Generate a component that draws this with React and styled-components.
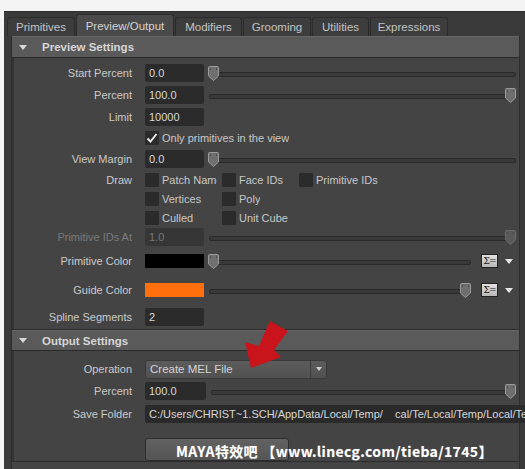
import React from 'react';
import styled, { createGlobalStyle } from 'styled-components';

const GlobalStyle = createGlobalStyle`
    html, body {
        margin: 0;
        padding: 0;
        background: #f4f4f4;
        font-family: "Liberation Sans", Arial, sans-serif;
        font-size: 11px;
        color: #c8c8c8;
    }
`;

const Page = styled.div`
    position: relative;
    width: 525px;
    height: 469px;
    padding-top: 11px;
    box-sizing: border-box;
    overflow: hidden;
`;

const Window = styled.div`
    margin-left: 4px;
    height: 458px;
    background: #3a3a3a;
    border-top: 1px solid #2e2e2e;
    box-sizing: border-box;
`;

const TabBar = styled.div`
    display: flex;
    align-items: flex-end;
    height: 24px;
    padding-left: 3px;
    gap: 1px;
`;

const Tab = styled.div`
    display: flex;
    align-items: center;
    justify-content: center;
    width: ${p => p.w}px;
    height: ${p => (p.active ? 22 : 19)}px;
    box-sizing: border-box;
    background: ${p => (p.active ? '#4a4a4a' : '#3d3d3d')};
    border: 1px solid #2c2c2c;
    border-bottom: none;
    border-radius: 3px 3px 0 0;
    color: ${p => (p.active ? '#d4d4d4' : '#c4c4c4')};
    font-size: 11.5px;
`;

const Panel = styled.div`
    margin-left: 7px;
    width: 509px;
    background: #444444;
    border-left: 1px solid #2e2e2e;
    border-right: 1px solid #2e2e2e;
    box-sizing: border-box;
    height: 434px;
`;

const SectionHeader = styled.div`
    display: flex;
    align-items: center;
    height: ${p => p.h}px;
    background: #5a5a5a;
    border-top: 1px solid #666;
    border-bottom: 1px solid #2a2a2a;
    box-sizing: border-box;
    font-weight: bold;
    font-size: 11.5px;
    color: #d6d6d6;
    padding-left: 7px;
    gap: 15px;
`;

const Triangle = styled.span`
    width: 0;
    height: 0;
    border-left: 4.5px solid transparent;
    border-right: 4.5px solid transparent;
    border-top: 5px solid #d8d8d8;
`;

const Content = styled.div`
    border-left: 2px solid #353535;
    border-bottom: 1px solid #2c2c2c;
    padding: ${p => p.pt}px 3px 0 0;
`;

const Row = styled.div`
    display: grid;
    grid-template-columns: 118px 1fr;
    column-gap: 13px;
    align-items: center;
    height: ${p => p.h}px;
    margin-top: ${p => p.mt || 0}px;
`;

const Label = styled.div`
    text-align: right;
    color: ${p => (p.disabled ? '#7a7a7a' : '#cacaca')};
    white-space: nowrap;
`;

const Controls = styled.div`
    display: flex;
    align-items: center;
    min-width: 0;
`;

const Field = styled.div`
    width: ${p => p.w || 59}px;
    flex: none;
    height: 18px;
    line-height: 18px;
    box-sizing: border-box;
    padding-left: 4px;
    background: ${p => (p.disabled ? '#363636' : '#2b2b2b')};
    border-radius: 2px;
    color: ${p => (p.disabled ? '#777' : '#d8d8d8')};
    white-space: nowrap;
    overflow: hidden;
`;

const LongField = styled(Field)`
    flex: 1;
    width: auto;
    margin-right: -10px;
    background: #2a2a2a;
`;

const Swatch = styled.div`
    width: 59px;
    height: 14px;
    flex: none;
    background: ${p => p.color};
`;

const Track = styled.div`
    position: relative;
    flex: 1;
    height: 15px;
    margin-left: ${p => p.ml || 4}px;
    &::before {
        content: '';
        position: absolute;
        left: 1px;
        right: 0;
        top: 6px;
        height: 3px;
        background: #393939;
        border: 1px solid #2a2a2a;
        border-radius: 2px;
    }
`;

const ThumbBox = styled.svg`
    position: absolute;
    top: 0;
    width: 11px;
    height: 15px;
`;

const Thumb = ({ at, disabled }) => (
    <ThumbBox viewBox="0 0 11 15" style={{ left: `calc(${at}% - ${at * 0.11}px)` }}>
        <path d="M1.5 0.5 H9.5 Q10.5 0.5 10.5 1.5 V10 L5.5 14.5 L0.5 10 V1.5 Q0.5 0.5 1.5 0.5 Z"
            fill={disabled ? '#5a5a5a' : '#6f6f6f'} stroke={disabled ? '#6a6a6a' : '#9a9a9a'} />
        <path d="M2.5 2.5 V4 M8.5 2.5 V4" stroke="#444" strokeWidth="1" />
    </ThumbBox>
);

const Slider = ({ at, disabled, ml }) => (
    <Track ml={ml}>
        <Thumb at={at} disabled={disabled} />
    </Track>
);

const SigmaButton = styled.div`
    width: 15px;
    height: 12px;
    margin-left: 10px;
    background: linear-gradient(#e0e0e0, #b8b8b8);
    border: 1px solid #222;
    color: #111;
    font-size: 9px;
    font-family: "DejaVu Serif", serif;
    line-height: 12px;
    text-align: center;
    letter-spacing: -1px;
`;

const MenuArrow = styled.span`
    margin-left: 7px;
    margin-right: 3px;
    border-left: 4.5px solid transparent;
    border-right: 4.5px solid transparent;
    border-top: 5px solid #e6e6e6;
`;

const CheckGrid = styled.div`
    display: flex;
    align-items: center;
`;

const Check = styled.label`
    display: flex;
    align-items: center;
    gap: 2px;
    width: ${p => p.w || 77}px;
    white-space: nowrap;
    overflow: hidden;
`;

const Box = styled.span`
    display: inline-flex;
    align-items: center;
    justify-content: center;
    width: 14px;
    height: 14px;
    flex: none;
    background: #2b2b2b;
    border-radius: 1px;
`;

const CheckText = styled.span`
    margin-left: 1px;
    max-width: ${p => p.max || 100}px;
    overflow: hidden;
`;

const CheckBox = ({ checked, children, w, max }) => (
    <Check w={w}>
        <Box>
            {checked && (
                <svg width="12" height="12" viewBox="0 0 12 12">
                    <path d="M1.5 6.5 L4.5 9.5 L10.5 2" fill="none" stroke="#eaeaea" strokeWidth="2" />
                </svg>
            )}
        </Box>
        <CheckText max={max}>{children}</CheckText>
    </Check>
);

const Dropdown = styled.div`
    display: flex;
    align-items: center;
    width: 182px;
    height: 19px;
    box-sizing: border-box;
    background: linear-gradient(#5c5c5c, #515151);
    border: 1px solid #3a3a3a;
    border-radius: 3px;
    color: #d4d4d4;
    font-size: 11.5px;
`;

const DropText = styled.span`
    flex: 1;
    padding-left: 4px;
`;

const DropButton = styled.span`
    display: flex;
    align-items: center;
    justify-content: center;
    width: 15px;
    height: 100%;
    border-left: 1px solid #3c3c3c;
    &::after {
        content: '';
        border-left: 3.5px solid transparent;
        border-right: 3.5px solid transparent;
        border-top: 4px solid #cfcfcf;
    }
`;

const Button = styled.div`
    width: 144px;
    height: 23px;
    box-sizing: border-box;
    background: linear-gradient(#626262, #545454);
    border: 1px solid #2e2e2e;
    border-radius: 3px;
`;

const Watermark = styled.div`
    position: absolute;
    left: 176px;
    top: 441px;
    color: #ffffff;
    font-family: "Noto Sans CJK SC", "DejaVu Sans", sans-serif;
    font-weight: bold;
    font-size: 14px;
    white-space: nowrap;
    letter-spacing: 0.35px;
    text-shadow: 0 0 1px #888;
`;

const Arrow = styled.svg`
    position: absolute;
    left: 0;
    top: 0;
    pointer-events: none;
`;

const tabs = [
    ['Primitives', 68],
    ['Preview/Output', 98],
    ['Modifiers', 67],
    ['Grooming', 68],
    ['Utilities', 57],
    ['Expressions', 78],
];

export default function App() {
    return (
        <>
            <GlobalStyle />
            <Page>
                <Window>
                    <TabBar>
                        {tabs.map(([t, w]) => (
                            <Tab key={t} w={w} active={t === 'Preview/Output'}>{t}</Tab>
                        ))}
                    </TabBar>
                    <Panel>
                        <SectionHeader h={22}><Triangle />Preview Settings</SectionHeader>
                        <Content pt={4}>
                            <Row h={22}>
                                <Label>Start Percent</Label>
                                <Controls><Field>0.0</Field><Slider at={0} /></Controls>
                            </Row>
                            <Row h={22}>
                                <Label>Percent</Label>
                                <Controls><Field>100.0</Field><Slider at={100} /></Controls>
                            </Row>
                            <Row h={22}>
                                <Label>Limit</Label>
                                <Controls><Field>10000</Field></Controls>
                            </Row>
                            <Row h={20}>
                                <Label />
                                <Controls><CheckBox checked w={200} max={200}>Only primitives in the view</CheckBox></Controls>
                            </Row>
                            <Row h={22}>
                                <Label>View Margin</Label>
                                <Controls><Field>0.0</Field><Slider at={0} /></Controls>
                            </Row>
                            <Row h={19}>
                                <Label>Draw</Label>
                                <CheckGrid>
                                    <CheckBox max={55}>Patch Names</CheckBox>
                                    <CheckBox>Face IDs</CheckBox>
                                    <CheckBox w={120}>Primitive IDs</CheckBox>
                                </CheckGrid>
                            </Row>
                            <Row h={19}>
                                <Label />
                                <CheckGrid>
                                    <CheckBox>Vertices</CheckBox>
                                    <CheckBox>Poly</CheckBox>
                                </CheckGrid>
                            </Row>
                            <Row h={19}>
                                <Label />
                                <CheckGrid>
                                    <CheckBox>Culled</CheckBox>
                                    <CheckBox>Unit Cube</CheckBox>
                                </CheckGrid>
                            </Row>
                            <Row h={20}>
                                <Label disabled>Primitive IDs At</Label>
                                <Controls><Field disabled>1.0</Field><Slider at={100} disabled /></Controls>
                            </Row>
                            <Row h={28}>
                                <Label>Primitive Color</Label>
                                <Controls>
                                    <Swatch color="#000" />
                                    <Slider at={0} />
                                    <SigmaButton>Σ=</SigmaButton>
                                    <MenuArrow />
                                </Controls>
                            </Row>
                            <Row h={30}>
                                <Label>Guide Color</Label>
                                <Controls>
                                    <Swatch color="#ff700c" />
                                    <Slider at={100} />
                                    <SigmaButton>Σ=</SigmaButton>
                                    <MenuArrow />
                                </Controls>
                            </Row>
                            <Row h={24}>
                                <Label>Spline Segments</Label>
                                <Controls><Field>2</Field></Controls>
                            </Row>
                        </Content>
                        <SectionHeader h={21}><Triangle />Output Settings</SectionHeader>
                        <Content pt={7}>
                            <Row h={22}>
                                <Label>Operation</Label>
                                <Controls>
                                    <Dropdown><DropText>Create MEL File</DropText><DropButton /></Dropdown>
                                </Controls>
                            </Row>
                            <Row h={22}>
                                <Label>Percent</Label>
                                <Controls><Field w={61}>100.0</Field><Slider at={100} ml={4} /></Controls>
                            </Row>
                            <Row h={24}>
                                <Label>Save Folder</Label>
                                <Controls>
                                    <LongField>C:/Users/CHRIST~1.SCH/AppData/Local/Temp/&nbsp;&nbsp;&nbsp;&nbsp;cal/Te/Local/Temp/Local/Te</LongField>
                                </Controls>
                            </Row>
                            <Row h={23} mt={12}>
                                <Label />
                                <Controls><Button /></Controls>
                            </Row>
                        </Content>
                    </Panel>
                </Window>
                <Watermark>MAYA特效吧 【www.linecg.com/tieba/1745】</Watermark>
                <Arrow width="525" height="469" viewBox="0 0 525 469">
                    <polygon points="270,321 288,331 274,350 281,357 251,368 245,342 259,346" fill="#c8141a" />
                </Arrow>
            </Page>
        </>
    );
}
